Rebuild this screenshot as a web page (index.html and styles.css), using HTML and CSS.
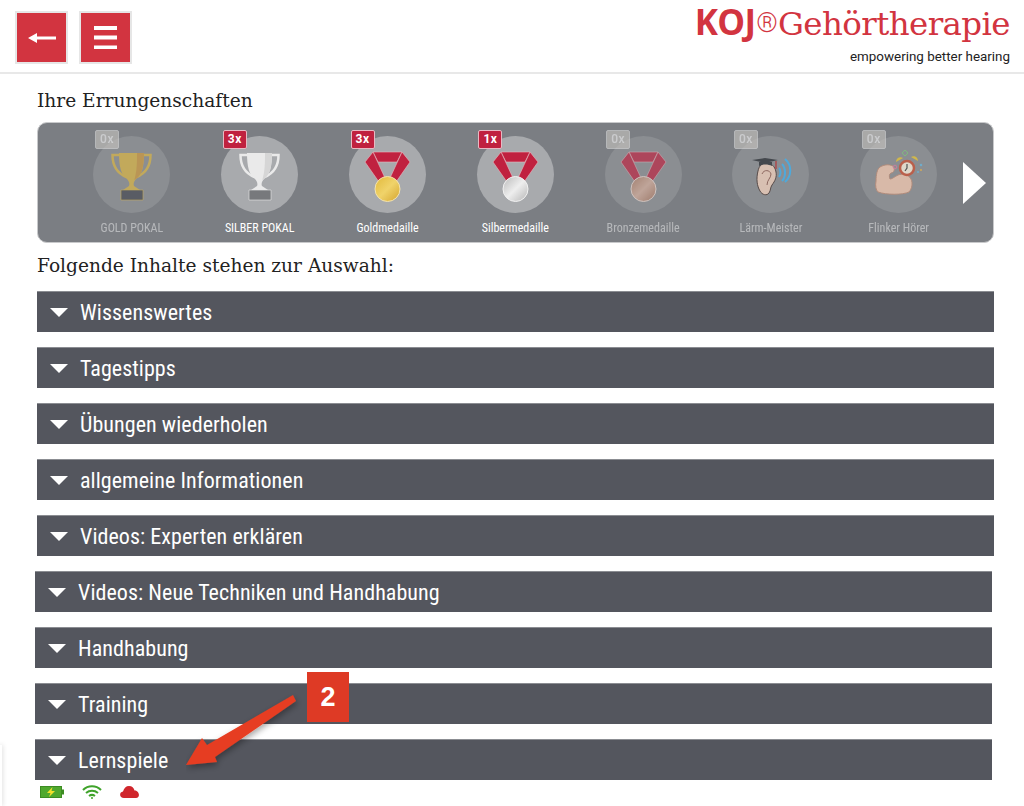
FILE: index.html
```html
<!DOCTYPE html>
<html lang="de">
<head>
    <meta charset="UTF-8">
    <meta name="viewport" content="width=device-width, initial-scale=1.0">
    <title>KOJ Gehörtherapie</title>
    <link rel="stylesheet" href="styles.css">
</head>
<body>
    <svg class="defs" width="0" height="0">
        <defs>
            <linearGradient id="gold" x1="0" y1="0" x2="1" y2="1">
                <stop offset="0" stop-color="#e2b93a"/><stop offset=".5" stop-color="#f0d36a"/><stop offset="1" stop-color="#d4a42c"/>
            </linearGradient>
            <linearGradient id="silver" x1="0" y1="0" x2="1" y2="1">
                <stop offset="0" stop-color="#b9b9b9"/><stop offset=".5" stop-color="#eeeeee"/><stop offset="1" stop-color="#b5b5b5"/>
            </linearGradient>
            <linearGradient id="bronze" x1="0" y1="0" x2="1" y2="1">
                <stop offset="0" stop-color="#b07a60"/><stop offset=".5" stop-color="#dcb29e"/><stop offset="1" stop-color="#a87058"/>
            </linearGradient>
            <symbol id="trophy" viewBox="0 0 77 77">
                <path d="M27 19H19.500c0 11 4 18 14 22M50 19h7.500c0 11-4 18-14 22" fill="none" stroke="var(--cup)" stroke-width="2.500"/>
                <path d="M26 17h25c0 13-2 22-8 26-2 2-3 5-2 7l6 4H30l6-4c1-2 0-5-2-7-6-4-8-13-8-26z" fill="var(--cup)"/>
                <path d="M44 17h7c0 13-2 22-8 26-1 0-2 1-2 2 3-9 3-19 3-28z" fill="var(--cup-dark)"/>
                <path d="M28 54h22v10H28z" fill="var(--base)" stroke="var(--cup)" stroke-width=".6"/>
            </symbol>
            <symbol id="ribbon" viewBox="0 0 77 77">
                <path d="M24 16h29l-5 10H29z" fill="#c0213f" stroke="#e8b8c0" stroke-width=".6"/>
                <path d="M16 26l8-10 12 26-6 4z" fill="#c0213f" stroke="#e8b8c0" stroke-width=".6"/>
                <path d="M61 26l-8-10-12 26 6 4z" fill="#c0213f" stroke="#e8b8c0" stroke-width=".6"/>
            </symbol>
            <symbol id="triangle" viewBox="0 0 20 10">
                <path d="M0 0h20L10 10z" fill="#fff"/>
            </symbol>
        </defs>
    </svg>

    <header class="topbar">
        <div class="topbtns">
            <button type="button" class="squarebtn">
                <svg width="28" height="12" viewBox="0 0 28 12"><path d="M0 6l9-5v3.500h19v3H9V11z" fill="#fff"/></svg>
            </button>
            <button type="button" class="squarebtn">
                <svg width="23" height="23" viewBox="0 0 23 23"><path d="M0 0h23v4H0zM0 9.500h23v4H0zM0 19.500h23v3.500H0z" fill="#fff"/></svg>
            </button>
        </div>
        <div class="logo">
            <div class="logoLine"><b class="koj">KOJ</b><span class="reg">®</span><span class="logoName">Gehörtherapie</span></div>
            <div class="claim">empowering better hearing</div>
        </div>
    </header>

    <main class="content">
        <h2 class="heading">Ihre Errungenschaften</h2>

        <section class="awards">
            <ul class="awardList">
                <li class="award off">
                    <span class="count">0x</span>
                    <span class="disc">
                        <svg class="gold" width="77" height="77"><use href="#trophy"/></svg>
                    </span>
                    <span class="awardName">GOLD POKAL</span>
                </li>
                <li class="award">
                    <span class="count">3x</span>
                    <span class="disc">
                        <svg class="silver" width="77" height="77"><use href="#trophy"/></svg>
                    </span>
                    <span class="awardName">SILBER POKAL</span>
                </li>
                <li class="award">
                    <span class="count">3x</span>
                    <span class="disc">
                        <svg width="77" height="77"><use href="#ribbon"/><circle cx="38.500" cy="53" r="12.500" fill="url(#gold)" stroke="#f3e3b0"/></svg>
                    </span>
                    <span class="awardName">Goldmedaille</span>
                </li>
                <li class="award">
                    <span class="count">1x</span>
                    <span class="disc">
                        <svg width="77" height="77"><use href="#ribbon"/><circle cx="38.500" cy="53" r="12.500" fill="url(#silver)" stroke="#f2f2f2"/></svg>
                    </span>
                    <span class="awardName">Silbermedaille</span>
                </li>
                <li class="award off">
                    <span class="count">0x</span>
                    <span class="disc">
                        <svg width="77" height="77"><use href="#ribbon"/><circle cx="38.500" cy="53" r="12.500" fill="url(#bronze)" stroke="#f2e0d8"/></svg>
                    </span>
                    <span class="awardName">Bronzemedaille</span>
                </li>
                <li class="award off">
                    <span class="count">0x</span>
                    <span class="disc">
                        <svg class="picto" width="77" height="77" viewBox="0 0 77 77">
                            <path d="M26 35c-2 8-1 15 2 20 2 4 7 5 9 2 2-3 1-5 3-8 3-4 5-8 4-13-1-6-5-9-10-9-4 0-7 3-8 8z" fill="#eccdbb" stroke="#4a3a36"/>
                            <path d="M30 38c2-5 8-4 9 0 0 4-4 6-4 11" fill="none" stroke="#8c5e52"/>
                            <path d="M20 24l13-2 13 2-13 3z" fill="#33373d"/>
                            <path d="M27 26h13v4c-4-2-9-2-13 0z" fill="#33373d"/>
                            <path d="M44 25v8" stroke="#b33a3a" stroke-width="1.500"/>
                            <path d="M47 32c2 2 2 6 0 9M50 28c4 4 4 13 0 17M53 23c7 6 7 17 0 23" fill="none" stroke="#3fb0ee" stroke-width="2"/>
                        </svg>
                    </span>
                    <span class="awardName">Lärm-Meister</span>
                </li>
                <li class="award off">
                    <span class="count">0x</span>
                    <span class="disc">
                        <svg class="picto" width="77" height="77" viewBox="0 0 77 77">
                            <path d="M20 31c-3 2-4 8-4 14-1 5 0 9 2 11 8 3 25 3 31 0 3-3 4-9 2-13-2-4-8-6-13-4-4 2-6 4-8 4-1-2-1-5 1-6 3 0 4-4 3-6-3-3-9-3-14 0z" fill="#ecc4ae" stroke="#b98a75"/>
                            <circle cx="47" cy="32" r="7" fill="#f3ead8" stroke="#c6543a" stroke-width="2.500"/>
                            <path d="M47 28v4l-2 3" fill="none" stroke="#444" stroke-width="1.200"/>
                            <path d="M36 26c0-4 4-6 7-4zM58 25c0-4-4-6-7-4z" fill="#e2c23a"/>
                            <path d="M45 14l3 3-3 3-3-3z" fill="none" stroke="#7cc47a"/>
                            <circle cx="35" cy="31" r="1.800" fill="none" stroke="#d77aa0"/>
                            <circle cx="61" cy="29" r="1.300" fill="#6ab4d8"/>
                            <circle cx="58" cy="36" r="1" fill="#6ab4d8"/>
                            <circle cx="61" cy="34" r="1" fill="#e3b04a"/>
                        </svg>
                    </span>
                    <span class="awardName">Flinker Hörer</span>
                </li>
            </ul>
            <svg class="nextArrow" width="23" height="42" viewBox="0 0 23 42"><path d="M0 0l23 21L0 42z" fill="#fff"/></svg>
        </section>

        <h2 class="heading heading2">Folgende Inhalte stehen zur Auswahl:</h2>

        <ul class="menu">
            <li class="menuItem"><svg width="18" height="9"><use href="#triangle"/></svg>Wissenswertes</li>
            <li class="menuItem"><svg width="18" height="9"><use href="#triangle"/></svg>Tagestipps</li>
            <li class="menuItem"><svg width="18" height="9"><use href="#triangle"/></svg>Übungen wiederholen</li>
            <li class="menuItem"><svg width="18" height="9"><use href="#triangle"/></svg>allgemeine Informationen</li>
            <li class="menuItem"><svg width="18" height="9"><use href="#triangle"/></svg>Videos: Experten erklären</li>
        </ul>
        <ul class="menu menuShift">
            <li class="menuItem"><svg width="18" height="9"><use href="#triangle"/></svg>Videos: Neue Techniken und Handhabung</li>
            <li class="menuItem"><svg width="18" height="9"><use href="#triangle"/></svg>Handhabung</li>
            <li class="menuItem"><svg width="18" height="9"><use href="#triangle"/></svg>Training</li>
            <li class="menuItem"><svg width="18" height="9"><use href="#triangle"/></svg>Lernspiele</li>
        </ul>

        <div class="status">
            <svg width="24" height="12" viewBox="0 0 24 12">
                <rect x=".5" y=".5" width="21" height="11" fill="#4fa82e" stroke="#3c8c22"/>
                <rect x="22" y="3.500" width="2" height="5" fill="#3c8c22"/>
                <path d="M12.500 1L7 7h3.500L9 11l6-6h-3.500z" fill="#f4e12c"/>
            </svg>
            <svg width="20" height="14" viewBox="0 0 20 14">
                <path d="M1 5c5-5 13-5 18 0M4 8c3.500-3 8.500-3 12 0M7 11c2-1.500 4-1.500 6 0" fill="none" stroke="#3fa32a" stroke-width="2"/>
                <circle cx="10" cy="13" r="1" fill="#3fa32a"/>
            </svg>
            <svg width="20" height="12" viewBox="0 0 20 12">
                <path d="M4 12c-5 0-5-6-1-6.500C4 2 6 0 9 0c3 0 5 2 5.500 4.500C19 4 21 12 16 12z" fill="#d0262c"/>
            </svg>
        </div>
    </main>

    <!-- Markierung aus der Anleitung -->
    <div class="step">2</div>
    <svg class="stepArrow" width="120" height="84" viewBox="0 0 120 84">
        <defs>
            <filter id="soft" x="-20%" y="-20%" width="140%" height="140%">
                <feDropShadow dx="1" dy="3" stdDeviation="3" flood-color="#000" flood-opacity=".35"/>
            </filter>
        </defs>
        <path d="M0 73L16 46l5 7L107 3l3 6-81 56 2 5z" fill="#e63d20" filter="url(#soft)"/>
    </svg>
    <div class="edgeShadow"></div>
</body>
</html>
```

FILE: styles.css
```css
*{
    box-sizing: border-box;
}
html,body{
    height: 100%;
}
body{
    margin: 0;
    background: #fff;
    color: #222;
    font-family: Roboto, "Liberation Sans", sans-serif;
    overflow: hidden;
    position: relative;
}
ul{
    list-style: none;
    margin: 0;
    padding: 0;
}
.defs{
    position: absolute;
}

/* kopf */
.topbar{
    height: 74px;
    border-bottom: 2px solid #e8e8e8;
    display: flex;
    justify-content: space-between;
    padding: 11px 14px 0 15px;
}
.topbtns{
    display: flex;
    gap: 11px;
    align-items: flex-start;
}
.squarebtn{
    width: 53px;
    height: 53px;
    background: #d23440;
    border: 2px solid #e6e6e6;
    padding: 0;
    display: flex;
    align-items: center;
    justify-content: center;
}
.logo{
    text-align: right;
    margin-top: -11px;
}
.logoLine{
    display: flex;
    justify-content: flex-end;
    align-items: baseline;
    color: #d23440;
    height: 47px;
    line-height: 43px;
}
.koj{
    font-family: "Open Sans", Roboto, sans-serif;
    font-weight: 700;
    font-size: 35px;
    letter-spacing: -.7px;
}
.reg{
    font-size: 27px;
    margin-left: 1px;
    position: relative;
    top: -3px;
    font-weight: 300;
}
.logoName{
    font-family: "Roboto Slab", "DejaVu Serif", serif;
    font-size: 32.500px;
    font-weight: 300;
    letter-spacing: -.6px;
}
.claim{
    font-size: 13.400px;
    color: #222;
    margin-top: 2px;
}

/* inhalt */
.content{
    padding: 15px 30px 0 37px;
}
.heading{
    margin: 0;
    font-family: "Roboto Slab", "DejaVu Serif", serif;
    font-weight: 400;
    font-size: 18.600px;
    line-height: 24px;
    color: #222;
}
.heading2{
    margin: 11px 0 13px;
}

.awards{
    height: 121px;
    margin-top: 9px;
    background: #7b7e83;
    border: 1px solid #c8c9cb;
    border-radius: 10px;
    display: flex;
    align-items: flex-start;
    padding-left: 30px;
}
.awardList{
    display: flex;
    width: 895px;
}
.award{
    width: 127.800px;
    display: flex;
    flex-direction: column;
    align-items: center;
    position: relative;
    padding-top: 13px;
}
.disc{
    width: 77px;
    height: 77px;
    border-radius: 50%;
    background: #a8aaad;
    display: block;
}
.disc svg{
    display: block;
}
.count{
    position: absolute;
    left: 27px;
    top: 7px;
    width: 24px;
    height: 19px;
    background: #c0213f;
    border: 1px solid #e7b9c3;
    border-radius: 2px;
    color: #fff;
    font-size: 12px;
    font-weight: 700;
    line-height: 17px;
    text-align: center;
    letter-spacing: .5px;
    z-index: 2;
}
.awardName{
    margin-top: 8px;
    color: #fff;
    font-family: "Roboto Condensed", "Liberation Sans Narrow", Roboto, sans-serif;
    font-size: 12px;
    line-height: 14px;
}
.award.off .disc{
    background: #8b8e92;
}
.award.off .disc svg{
    opacity: .65;
}
.award.off .disc .picto{
    opacity: .8;
}
.award.off .awardName{
    opacity: .45;
}
.award.off .count{
    background: #c9c6c2;
    border-color: #ddd;
    color: #fff;
    font-weight: 500;
    opacity: .6;
}
.gold{
    --cup: #e0b83f;
    --cup-dark: #d49a36;
    --base: #3f424c;
}
.silver{
    --cup: #eaeaea;
    --cup-dark: #d6d6d6;
    --base: #77797c;
}
.nextArrow{
    margin: 39px 0 0 0;
}

.menu{
    display: flex;
    flex-direction: column;
    gap: 15px;
}
.menuShift{
    margin: 15px 2px 0 -2px;
}
.menuItem{
    height: 41px;
    background: #54565e;
    border-top: 1px solid #8b8d92;
    color: #fff;
    font-family: "Roboto Condensed", "Liberation Sans Narrow", Roboto, sans-serif;
    font-size: 22px;
    letter-spacing: .06px;
    display: flex;
    align-items: center;
    gap: 12px;
    padding-left: 13px;
}

.status{
    display: flex;
    align-items: center;
    gap: 18px;
    margin: 5px 0 0 3px;
}
.status svg{
    display: block;
}

/* markierung */
.step{
    position: absolute;
    left: 307px;
    top: 672px;
    width: 42px;
    height: 50px;
    background: #de3a25;
    color: #fff;
    font-family: "Liberation Sans", sans-serif;
    font-weight: 700;
    font-size: 27px;
    line-height: 50px;
    text-align: center;
}
.stepArrow{
    position: absolute;
    left: 186px;
    top: 692px;
}
.edgeShadow{
    position: absolute;
    left: 0;
    top: 745px;
    width: 2px;
    height: 61px;
    box-shadow: 0 0 5px rgba(0,0,0,.25);
}
```
